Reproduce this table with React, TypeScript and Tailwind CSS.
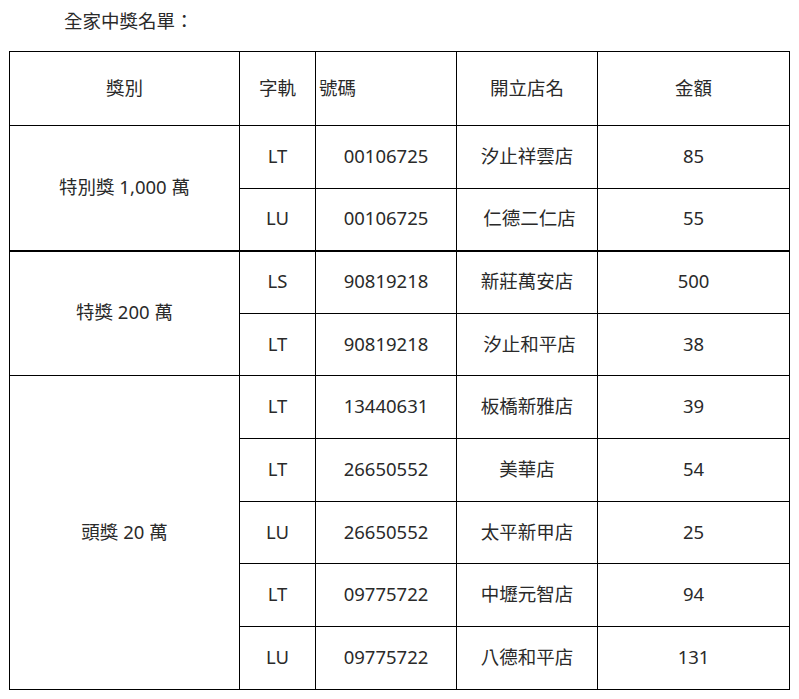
import React from "react";

type Row = { track: string; num: string; store: string; amt: string };
type Group = { name: string; rows: Row[] };

const groups: Group[] = [
  {
    name: "特別獎 1,000 萬",
    rows: [
      { track: "LT", num: "00106725", store: "汐止祥雲店", amt: "85" },
      { track: "LU", num: "00106725", store: "\u00a0仁德二仁店", amt: "55" },
    ],
  },
  {
    name: "特獎 200 萬",
    rows: [
      { track: "LS", num: "90819218", store: "新莊萬安店", amt: "500" },
      { track: "LT", num: "90819218", store: "\u00a0汐止和平店", amt: "38" },
    ],
  },
  {
    name: "頭獎 20 萬",
    rows: [
      { track: "LT", num: "13440631", store: "板橋新雅店", amt: "39" },
      { track: "LT", num: "26650552", store: "美華店", amt: "54" },
      { track: "LU", num: "26650552", store: "太平新甲店", amt: "25" },
      { track: "LT", num: "09775722", store: "中壢元智店", amt: "94" },
      { track: "LU", num: "09775722", store: "八德和平店", amt: "131" },
    ],
  },
];

const heights = [63, 62, 63, 62, 63, 63, 62, 63, 63];

export default function App() {
  let idx = 0;
  return (
    <div
      className="w-[799px] h-[699px] bg-white text-[#2a2a2a] text-[18.5px] overflow-hidden"
      style={{ fontFamily: '"Noto Sans", "Noto Sans CJK TC", sans-serif' }}
    >
      <div className="pl-[64px] pt-[7px] h-[51px] leading-[28px]">全家中獎名單：</div>
      <table className="ml-[9px] border-collapse table-fixed w-[780px]">
        <colgroup>
          <col className="w-[230px]" />
          <col className="w-[76px]" />
          <col className="w-[141px]" />
          <col className="w-[141px]" />
          <col className="w-[192px]" />
        </colgroup>
        <tbody>
          <tr className="h-[74px]">
            <td className="border border-black text-center p-0 pb-[2px]">獎別</td>
            <td className="border border-black text-center p-0 pb-[2px]">字軌</td>
            <td className="border border-black text-left pl-[3px] pt-0 pb-[2px]">號碼</td>
            <td className="border border-black text-center p-0 pb-[2px]">開立店名</td>
            <td className="border border-black text-center p-0 pb-[2px]">金額</td>
          </tr>
          {groups.map((g, gi) =>
            g.rows.map((r, ri) => {
              const h = heights[idx++];
              const last = ri === g.rows.length - 1;
              const bottom = last && gi === 0 ? "border-b-2" : "";
              return (
                <tr key={`${gi}-${ri}`} style={{ height: h }}>
                  {ri === 0 && (
                    <td
                      rowSpan={g.rows.length}
                      className={`border border-black text-center p-0 pb-[2px] ${gi === 0 ? "border-b-2" : ""}`}
                    >
                      {g.name}
                    </td>
                  )}
                  <td className={`border border-black text-center p-0 pb-[2px] ${bottom}`}>{r.track}</td>
                  <td className={`border border-black text-center p-0 pb-[2px] ${bottom}`}>{r.num}</td>
                  <td className={`border border-black text-center p-0 pb-[2px] ${bottom}`}>{r.store}</td>
                  <td className={`border border-black text-center p-0 pb-[2px] ${bottom}`}>{r.amt}</td>
                </tr>
              );
            })
          )}
        </tbody>
      </table>
    </div>
  );
}
